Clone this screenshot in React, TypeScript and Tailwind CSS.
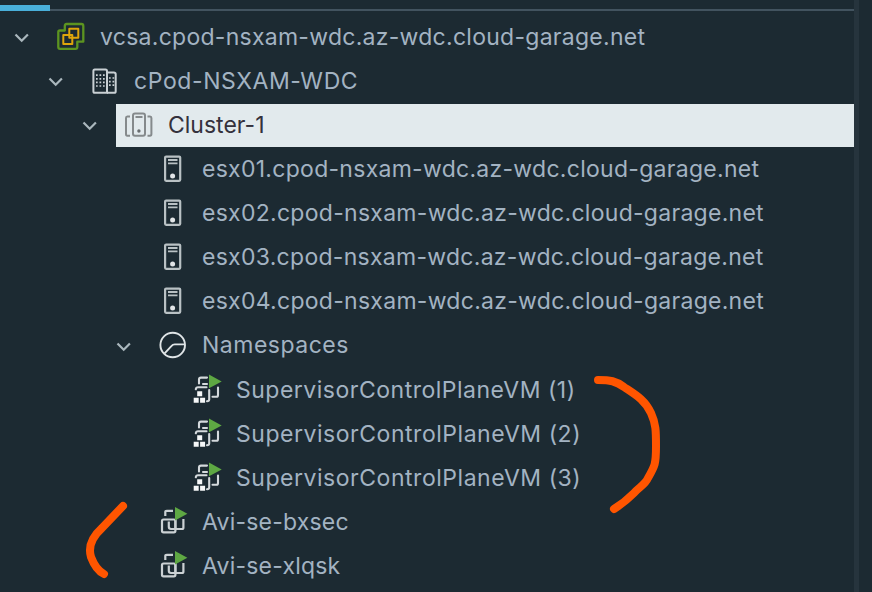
import React from 'react';

type Kind = 'vcenter' | 'datacenter' | 'cluster' | 'host' | 'namespace' | 'supervisor' | 'vm';

interface Node {
  label: string;
  kind: Kind;
  pad: string;
  open?: boolean;
  tracking: string;
}

const nodes: Node[] = [
  { label: 'vcsa.cpod-nsxam-wdc.az-wdc.cloud-garage.net', kind: 'vcenter', pad: 'pl-0', open: true, tracking: 'tracking-[0.27px]' },
  { label: 'cPod-NSXAM-WDC', kind: 'datacenter', pad: 'pl-[34px]', open: true, tracking: 'tracking-[0.6px]' },
  { label: 'Cluster-1', kind: 'cluster', pad: 'pl-[68px]', open: true, tracking: 'tracking-[0px]' },
  { label: 'esx01.cpod-nsxam-wdc.az-wdc.cloud-garage.net', kind: 'host', pad: 'pl-[102px]', tracking: 'tracking-[0.28px]' },
  { label: 'esx02.cpod-nsxam-wdc.az-wdc.cloud-garage.net', kind: 'host', pad: 'pl-[102px]', tracking: 'tracking-[0.28px]' },
  { label: 'esx03.cpod-nsxam-wdc.az-wdc.cloud-garage.net', kind: 'host', pad: 'pl-[102px]', tracking: 'tracking-[0.28px]' },
  { label: 'esx04.cpod-nsxam-wdc.az-wdc.cloud-garage.net', kind: 'host', pad: 'pl-[102px]', tracking: 'tracking-[0.28px]' },
  { label: 'Namespaces', kind: 'namespace', pad: 'pl-[102px]', open: true, tracking: 'tracking-[0.5px]' },
  { label: 'SupervisorControlPlaneVM (1)', kind: 'supervisor', pad: 'pl-[136px]', tracking: 'tracking-[0.5px]' },
  { label: 'SupervisorControlPlaneVM (2)', kind: 'supervisor', pad: 'pl-[136px]', tracking: 'tracking-[0.53px]' },
  { label: 'SupervisorControlPlaneVM (3)', kind: 'supervisor', pad: 'pl-[136px]', tracking: 'tracking-[0.53px]' },
  { label: 'Avi-se-bxsec', kind: 'vm', pad: 'pl-[102px]', tracking: 'tracking-[0.2px]' },
  { label: 'Avi-se-xlqsk', kind: 'vm', pad: 'pl-[102px]', tracking: 'tracking-[0.2px]' },
];

function Glyph({ kind }: { kind: Kind }) {
  switch (kind) {
    case 'vcenter':
      return (
        <g strokeWidth="2.3" strokeLinejoin="round">
          <path stroke="#5c9420" d="M9.5 1H24.5Q26.3 1 26.3 3V18.7H20.3V24Q20.3 25.8 18.5 25.8H3Q1.3 25.8 1.3 24V9Q1.3 7.5 3 7.5H7.8V3Q7.8 1 9.5 1Z" />
          <path stroke="#dea50b" d="M12.3 5.7H21.3V14.7H15.3V21H6.3V12H12.3Z M12.3 12V14.7H15.3V12Z" strokeWidth="2" />
        </g>
      );
    case 'datacenter':
      return (
        <g stroke="#c9d0d4" strokeWidth="2">
          <path d="M3.8 2.6H14.5Q16 2.6 16 4.2V25.8H3.8Q2.4 25.8 2.4 24.2V4.2Q2.4 2.6 3.8 2.6Z" />
          <path d="M16 5.5H22.8Q24.7 5.5 24.7 7.3V24.2Q24.7 25.8 23.2 25.8H16" />
          <path strokeWidth="1.7" strokeDasharray="1.7 1.8" d="M5 8.2H14M5 11.8H14M5 15.4H14M5 19H14M18 11H24M18 14.6H24M18 18.2H24" />
        </g>
      );
    case 'cluster':
      return (
        <g stroke="#858a8c" strokeWidth="2">
          <rect x="8" y="2.6" width="12" height="22.2" rx="2" />
          <path d="M10.5 6H17.5M5 5.5H2.3Q1 5.5 1 7V23Q1 24.7 2.3 24.7H5M22.5 5.5H25Q26.4 5.5 26.4 7V23Q26.4 24.7 25 24.7H22.5" />
          <circle cx="13.9" cy="20" r="1.7" fill="#686d70" stroke="none" />
        </g>
      );
    case 'host':
      return (
        <g stroke="#b9c1c4" strokeWidth="2.2">
          <rect x="6.1" y="1.6" width="15.1" height="24.2" rx="1" />
          <path strokeWidth="1.8" d="M9 5H18.5M9 8.3H18.5" />
          <circle cx="13.6" cy="21" r="2.5" fill="#e1e5e7" stroke="none" />
        </g>
      );
    case 'namespace':
      return (
        <g stroke="#dfe4e6" strokeWidth="1.9">
          <circle cx="13.7" cy="14" r="12.3" />
          <path d="M25.7 13.4H15.7Q13.8 13.4 12.6 14.8L5.6 22.4" />
        </g>
      );
    case 'supervisor':
      return (
        <g stroke="#d4d9dc" strokeWidth="2.1" strokeLinecap="round">
          <path d="M6 8.5V4.5Q6 2.6 8 2.6H14M2.8 14.3Q3 12.3 5 12.3H13.5M10 9H14M16.2 15V24.5Q16.2 26 14 26.2M19.5 21.8H23.5Q25 21.8 25 20V12.5" />
          <path fill="#f5f7f8" stroke="none" d="M4.2 16.2h5v5h-5zM.7 22.8h5v5h-5zM7.1 22.8h5v5h-5z" />
          <path fill="#5ea843" stroke="none" d="M16 -.5L28.7 6.4L16 13.3Z" />
        </g>
      );
    case 'vm':
      return (
        <g stroke="#cbd1d4" strokeWidth="2.2">
          <rect x="3" y="12.5" width="13.4" height="12.8" rx="1.5" />
          <path d="M6.3 9V5Q6.3 3.8 7.8 3.8H14M9.8 14.5V19.8Q9.8 22 12 22H23Q24.4 22 24.4 20.5V12M16.4 12V22" />
          <path fill="#5ea843" stroke="none" d="M16 0L28.4 6.7L16 13.4Z" />
        </g>
      );
  }
}

function TreeRow({ node }: { node: Node }) {
  const selected = node.kind === 'cluster';
  return (
    <li className={`flex h-[44.08px] items-stretch ${node.pad}`}>
      <div className="flex w-12 shrink-0 items-center pl-[14px]">
        {node.open && (
          <svg width="16" height="10" viewBox="0 0 16 10" fill="none" className="mt-[3px]">
            <path d="M1.5 1.5L7.7 7.8L13.9 1.5" stroke="#aab7bd" strokeWidth="2.2" />
          </svg>
        )}
      </div>
      <div className={`mt-[1.3px] flex h-[42.8px] flex-1 items-center pl-[9px] ${selected ? 'bg-[#e2eaed] text-[#34313c]' : 'text-[#a3b3c2]'}`}>
        <svg width="28" height="28" viewBox="0 0 28 28" fill="none" className="mb-[1.4px] mr-[15px] shrink-0 overflow-visible">
          <Glyph kind={node.kind} />
        </svg>
        <span className={`mb-[0.6px] whitespace-nowrap text-[23px] leading-7 ${node.tracking}`}>{node.label}</span>
      </div>
    </li>
  );
}

export default function App() {
  return (
    <div className="relative flex h-[592px] w-[872px] overflow-hidden bg-[#1c2a32] font-['Inter',sans-serif]">
      <main className="flex w-[853.5px] flex-col">
        <header className="flex h-[11px] shrink-0 items-end">
          <div className="h-[6px] w-[50px] bg-[#49afd9]" />
          <div className="h-[2px] flex-1 bg-[#42535f]" />
        </header>
        <ul className="mt-[3.5px] flex flex-col">
          {nodes.map((node) => (
            <TreeRow key={node.label} node={node} />
          ))}
        </ul>
      </main>
      <div className="w-[5px] bg-[#26343d]" />
      <svg className="pointer-events-none absolute inset-0" width="872" height="592" fill="none" stroke="#ff5500" strokeWidth="8" strokeLinecap="round" strokeLinejoin="round">
        <path d="M598 380C610 380 616 381 624 387C636 395 645 400 651 413C656 424 656 431 656 446C656 464 655 466 648 478C645 485 639 487 634 493C626 501 622 504 614 509" />
        <path d="M123 506L102 528C91 538 88 547 91 557C94 565 98 571 104 574" />
      </svg>
    </div>
  );
}
